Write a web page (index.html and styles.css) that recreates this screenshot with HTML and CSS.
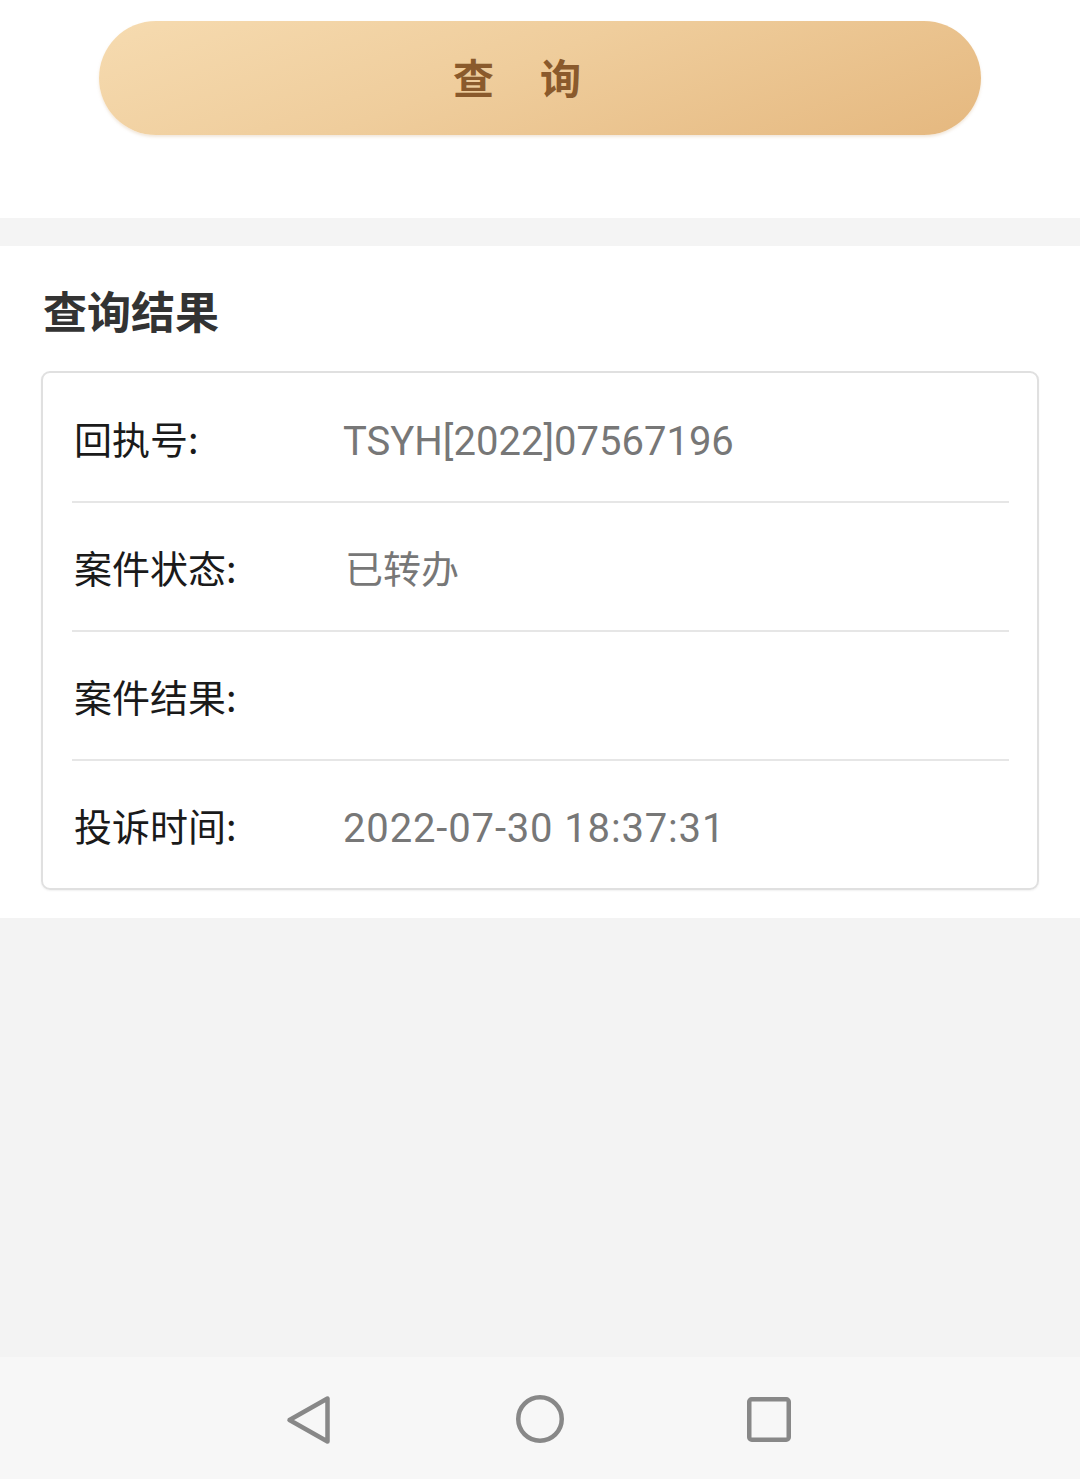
FILE: index.html
```html
<!DOCTYPE html>
<html lang="zh-CN">
<head>
<meta charset="utf-8">
<title>查询结果</title>
<link rel="stylesheet" href="styles.css">
</head>
<body>
<div class="page">
  <section class="top">
    <button class="query-btn">查询</button>
  </section>
  <div class="sep"></div>
  <section class="result">
    <h2 class="result-title">查询结果</h2>
    <div class="card">
      <div class="row">
        <span class="label">回执号:</span>
        <span class="value">TSYH[2022]07567196</span>
      </div>
      <div class="row">
        <span class="label">案件状态:</span>
        <span class="value cjk">已转办</span>
      </div>
      <div class="row">
        <span class="label">案件结果:</span>
        <span class="value"></span>
      </div>
      <div class="row">
        <span class="label">投诉时间:</span>
        <span class="value date">2022-07-30 18:37:31</span>
      </div>
    </div>
  </section>
  <div class="rest"></div>
  <nav class="navbar">
    <svg class="nav-icon back" width="50" height="56" viewBox="0 0 50 56"><path d="M44.5 7.5 L44.5 50.5 L6.5 29 Z" fill="none" stroke="#888" stroke-width="4.5" stroke-linejoin="round"/></svg>
    <svg class="nav-icon home" width="56" height="56" viewBox="0 0 56 56"><circle cx="28" cy="28" r="21.75" fill="none" stroke="#888" stroke-width="4.5"/></svg>
    <svg class="nav-icon recent" width="52" height="56" viewBox="0 0 52 56"><rect x="5.25" y="8.25" width="39.5" height="40.5" rx="2.5" fill="none" stroke="#888" stroke-width="4.5"/></svg>
  </nav>
</div>
</body>
</html>
```

FILE: styles.css
```css
* { box-sizing: border-box; }
html, body { margin: 0; padding: 0; }
body {
  background: #f3f3f3;
  font-family: "Noto Sans CJK SC", "Noto Sans", sans-serif;
}
.page {
  width: 1080px;
  height: 1479px;
  display: flex;
  flex-direction: column;
}
.top {
  background: #fff;
  height: 218px;
  padding: 21px 99px 0;
}
.query-btn {
  display: block;
  width: 882px;
  height: 114px;
  border: none;
  border-radius: 57px;
  background: linear-gradient(160deg, #f6dbb0 0%, #efcd9c 45%, #e5b87f 100%);
  color: #8a5a2c;
  font-family: "Noto Sans CJK SC", sans-serif;
  font-weight: 700;
  font-size: 41px;
  letter-spacing: 46px;
  padding: 0 0 4px 0;
  line-height: 110px;
  box-shadow: 0 2px 3px rgba(200,160,110,0.25);
}
.sep {
  height: 28px;
  background: #f4f4f4;
}
.result {
  background: #fff;
  padding: 42px 41px 28px;
}
.result-title {
  margin: 0 0 39px 2px;
  font-size: 44px;
  line-height: 44px;
  font-weight: 700;
  color: #333;
}
.card {
  border: 2px solid #e0e0e0;
  border-radius: 9px;
  padding: 1px 28px 0 29px;
  box-shadow: 0 1px 2px rgba(0,0,0,0.06);
}
.row {
  display: flex;
  align-items: center;
  height: 129px;
  border-bottom: 2px solid #e6e6e6;
}
.row:last-child {
  border-bottom: none;
  height: 127px;
}
.label {
  width: 271px;
  padding-left: 2px;
  font-size: 38px;
  color: #1a1a1a;
  flex-shrink: 0;
}
.value {
  font-family: Roboto, "Noto Sans CJK SC", sans-serif;
  font-size: 40px;
  color: #777;
  padding-top: 7px;
}
.value.date {
  letter-spacing: 0.85px;
}
.value.cjk {
  font-family: "Noto Sans CJK SC", sans-serif;
  font-size: 38px;
  padding-left: 2px;
  padding-top: 0;
}
.rest {
  flex: 1;
  background: #f3f3f3;
}
.navbar {
  height: 122px;
  background: #f7f7f7;
  display: flex;
  align-items: center;
  padding-left: 283px;
  padding-top: 2px;
}
.nav-icon.back { margin-right: 179px; }
.nav-icon.home { margin-right: 176px; }
```
